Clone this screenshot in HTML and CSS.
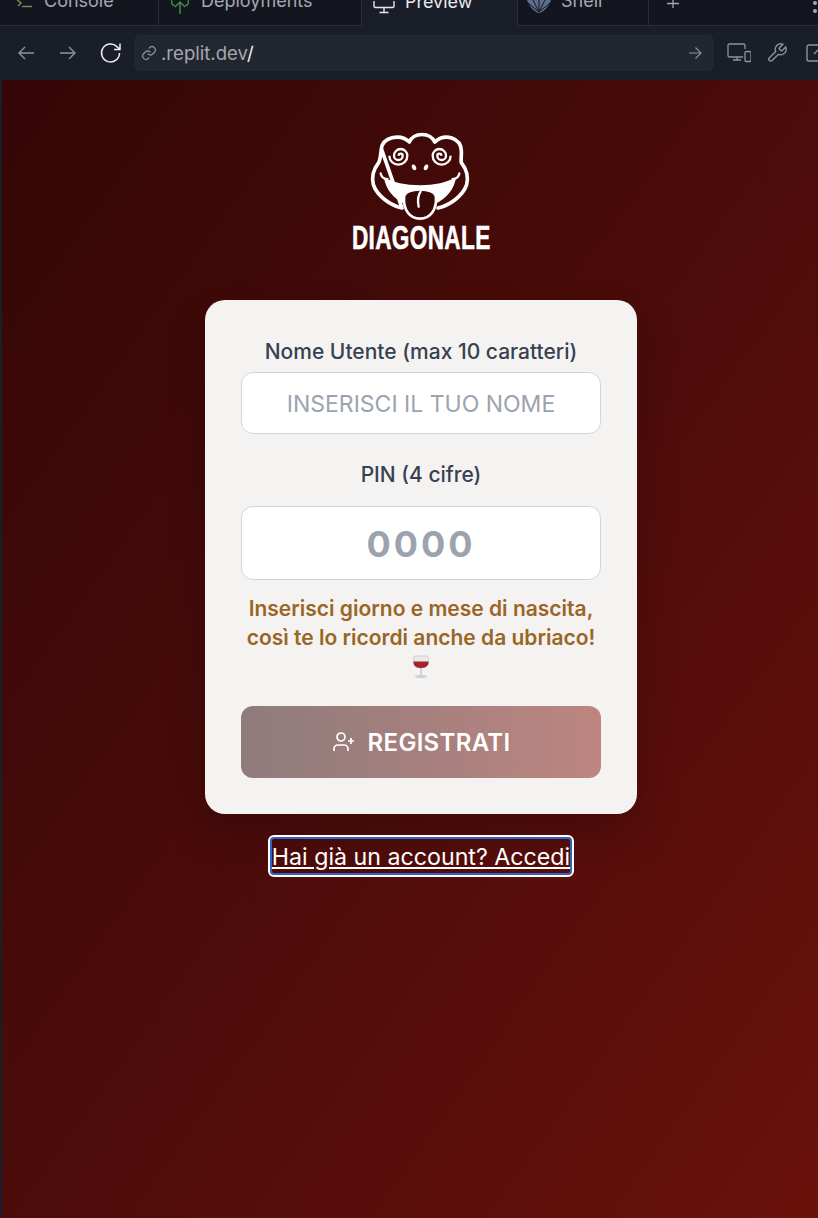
FILE: index.html
```html
<!DOCTYPE html>
<html>
  <head>
    <title>Diagonale</title>
    <link rel="stylesheet" href="styles.css">
  </head>
  <body>
    <div class="tabbar">
      <div class="tab tab-console">
        <svg class="tab-icon" width="20" height="12" viewBox="0 0 20 12"><path d="M1 0l7 6-3 3" fill="none" stroke="#8f8560" stroke-width="1.4"/><path d="M9 9.500h10" stroke="#8f8560" stroke-width="1.4"/></svg>
        <span>Console</span>
      </div>
      <div class="tab tab-deploy">
        <svg class="tab-icon" width="20" height="14" viewBox="0 0 20 14"><path d="M10 14V2M5 7l5-5 5 5" fill="none" stroke="#3f8a4a" stroke-width="1.5"/><path d="M2 0c-1 3 0 5 3 6M18 0c1 3 0 5-3 6" fill="none" stroke="#3f8a4a" stroke-width="1.3"/></svg>
        <span>Deployments</span>
      </div>
      <div class="tab tab-preview">
        <svg class="tab-icon" width="22" height="13" viewBox="0 0 22 13"><path d="M1 0v5a1.500 1.500 0 0 0 1.500 1.500h17A1.500 1.500 0 0 0 21 5V0M11 6.500v5M6.500 11.500h9" fill="none" stroke="#e4e6ea" stroke-width="1.4"/></svg>
        <span>Preview</span>
      </div>
      <div class="tab tab-shell">
        <svg class="tab-icon" width="24" height="13" viewBox="0 0 24 13"><path d="M12 13C9 13 2 7 0 0h24c-2 7-9 13-12 13z" fill="#5d6f8c"/><path d="M12 12L6 0M12 12V0M12 12l6-12M12 12L1 3M12 12l11-9" stroke="#14161f" stroke-width="1"/></svg>
        <span>Shell</span>
      </div>
      <div class="tab tab-add">
        <svg width="14" height="14" viewBox="0 0 14 14"><path d="M7 0v8M1 3.500h12" stroke="#a4a8b0" stroke-width="1.3"/></svg>
      </div>
      <div class="tab-more"><i></i><i></i></div>
    </div>

    <div class="toolbar">
      <svg class="nav-icon" width="20" height="20" viewBox="0 0 20 20"><path d="M18 10H3M9 4l-6 6 6 6" fill="none" stroke="#8d929b" stroke-width="1.4"/></svg>
      <svg class="nav-icon" width="20" height="20" viewBox="0 0 20 20"><path d="M2 10h15M11 4l6 6-6 6" fill="none" stroke="#8d929b" stroke-width="1.4"/></svg>
      <svg class="nav-icon" width="24" height="24" viewBox="0 0 24 24"><path d="M20.500 12a9 9 0 1 1-2.600-6.400L21 8.500M21 2.500v6h-6" fill="none" stroke="#eceef1" stroke-width="1.5"/></svg>
      <div class="address">
        <svg width="16" height="16" viewBox="0 0 24 24"><path d="M10 13a5 5 0 0 0 7.500.5l3-3a5 5 0 0 0-7-7l-1.700 1.700M14 11a5 5 0 0 0-7.500-.5l-3 3a5 5 0 0 0 7 7l1.700-1.700" fill="none" stroke="#868b94" stroke-width="2"/></svg>
        <span class="address-text">.replit.dev<b>/</b></span>
        <svg class="address-go" width="14" height="14" viewBox="0 0 14 14"><path d="M1 7h12M7.500 1.500L13 7l-5.500 5.500" fill="none" stroke="#8d929b" stroke-width="1.1"/></svg>
      </div>
      <svg class="tool-icon" width="24" height="22" viewBox="0 0 24 22"><path d="M16 15H2.500A1.500 1.500 0 0 1 1 13.500v-10A1.500 1.500 0 0 1 2.500 2h14A1.500 1.500 0 0 1 18 3.500V7M10 15v3M6 18h8" fill="none" stroke="#8d929b" stroke-width="1.3"/><rect x="18" y="9.500" width="6" height="10" rx="1.200" fill="none" stroke="#8d929b" stroke-width="1.3"/></svg>
      <svg class="tool-icon wrench" width="22" height="22" viewBox="0 0 24 24"><path d="M14.700 6.300a1 1 0 0 0 0 1.400l1.600 1.600a1 1 0 0 0 1.400 0l3.800-3.800a6 6 0 0 1-7.900 7.900l-6.900 6.900a2.100 2.100 0 0 1-3-3l6.900-6.900a6 6 0 0 1 7.900-7.900z" fill="none" stroke="#8d929b" stroke-width="1.5"/></svg>
      <svg class="tool-icon" width="18" height="18" viewBox="0 0 18 18"><path d="M17 1H3a2 2 0 0 0-2 2v12a2 2 0 0 0 2 2h15M8 10l6-6" fill="none" stroke="#8d929b" stroke-width="1.4"/></svg>
    </div>

    <div class="app">
      <div class="logo">
        <svg class="logo-mark" width="115" height="95" viewBox="0 0 345 285">
          <path d="M52 62C56 30 106 14 136 42C150 12 198 12 212 42C244 14 290 30 292 68C293 84 290 94 292 104C306 122 314 146 308 170C296 205 256 232 222 240M114 240C80 232 40 205 28 170C22 146 30 122 44 104C50 92 50 78 52 62Z" fill="none" stroke="#fff" stroke-width="11" stroke-linejoin="round" stroke-linecap="round"/>
          <path d="M60 147C110 180 226 180 276 147C272 185 245 212 214 228L205 200H130L122 228C90 212 64 185 60 147Z" fill="#fff"/>
          <path d="M120 208C120 176 216 176 216 208C218 244 200 272 168 272C136 272 118 244 120 208Z" fill="#3b0908" stroke="#fff" stroke-width="8"/>
          <path d="M170 190C162 202 160 218 164 236" fill="none" stroke="#fff" stroke-width="7" stroke-linecap="round"/>
          <path d="M50 136C52 148 60 153 70 153M286 136C284 148 276 153 266 153" fill="none" stroke="#fff" stroke-width="7" stroke-linecap="round"/>
          <ellipse cx="150" cy="118" rx="6" ry="9" transform="rotate(-25 150 118)" fill="#fff"/>
          <ellipse cx="186" cy="118" rx="6" ry="9" transform="rotate(25 186 118)" fill="#fff"/>
          <path class="spiral" d="M104 83a6 6 0 0 1 12 0a13 13 0 0 1-26 0a20 20 0 0 1 40 0a27 27 0 0 1-54 0"/>
          <path class="spiral" d="M232 83a6 6 0 0 0-12 0a13 13 0 0 0 26 0a20 20 0 0 0-40 0a27 27 0 0 0 54 0"/>
        </svg>
        <div class="logo-name">DIAGONALE</div>
      </div>

      <form class="card">
        <label class="field-label" for="username">Nome Utente (max 10 caratteri)</label>
        <input class="text-input" type="text" id="username" placeholder="INSERISCI IL TUO NOME">
        <label class="field-label pin-label" for="pin">PIN (4 cifre)</label>
        <input class="text-input pin-input" type="text" id="pin" placeholder="0000">
        <p class="pin-hint">Inserisci giorno e mese di nascita, così te lo ricordi anche da ubriaco!
          <svg class="wine" width="20" height="24" viewBox="0 0 20 24">
            <path d="M3.500 1h13c2 5 1.500 12-6.500 12S1.500 6 3.500 1z" fill="#e9e9ea" stroke="#b9bbbf" stroke-width=".6"/>
            <path d="M2.500 6.500h15c.3 3.500-1.500 6.500-7.500 6.500s-7.800-3-7.500-6.500z" fill="#a3222c"/>
            <path d="M9.200 13h1.600v7H9.200z" fill="#c9cbce"/>
            <ellipse cx="10" cy="21.500" rx="6" ry="1.700" fill="#cfd1d4"/>
          </svg>
        </p>
        <button class="submit-btn" type="button">
          <svg width="24" height="24" viewBox="0 0 24 24"><path d="M16 21v-2a4 4 0 0 0-4-4H6a4 4 0 0 0-4 4v2M19 8v6M22 11h-6" fill="none" stroke="#fff" stroke-width="1.7"/><circle cx="9" cy="7" r="4" fill="none" stroke="#fff" stroke-width="1.7"/></svg>
          <span class="submit-text">REGISTRATI</span>
        </button>
      </form>

      <a class="switch-link" href="#">Hai già un account? Accedi</a>
    </div>
  </body>
</html>
```

FILE: styles.css
```css
* {
  box-sizing: border-box;
}
html, body {
  height: 100%;
}
body {
  margin: 0;
  overflow: hidden;
  background-color: #1a1e28;
  font-family: "Inter", "Liberation Sans", sans-serif;
  display: flex;
  flex-direction: column;
}

/* replit tabs */
.tabbar {
  height: 26px;
  flex: none;
  display: flex;
  background-color: #14161f;
  color: #a4a8b0;
  font-size: 18px;
  overflow: hidden;
}
.tab {
  display: flex;
  align-items: flex-end;
  gap: 12px;
  height: 26px;
  line-height: 20px;
  padding-bottom: 14px;
  border-right: 1px solid #2a2d37;
  border-bottom: 1px solid #2a2d37;
}
.tab-icon {
  flex: none;
}
.tab-console {
  width: 159px;
  padding-left: 13px;
  gap: 11px;
}
.tab-console .tab-icon {
  margin-bottom: 2px;
}
.tab-deploy {
  width: 203px;
  padding-left: 11px;
  gap: 11px;
}
.tab-deploy .tab-icon {
  margin-bottom: -3px;
}
.tab-preview {
  width: 156px;
  padding-left: 11px;
  color: #e8eaee;
  background-color: #1a1e28;
  border-bottom: none;
  gap: 10px;
}
.tab-preview .tab-icon {
  margin-bottom: -2px;
}
.tab-shell {
  width: 131px;
  padding-left: 9px;
  gap: 10px;
}
.tab-shell .tab-icon {
  margin-bottom: -2px;
}
.tab-add {
  flex: 1;
  padding-left: 17px;
  padding-bottom: 11px;
  border-right: none;
}
.tab-more {
  width: 18px;
  flex: none;
  border-bottom: 1px solid #2a2d37;
  display: flex;
  flex-direction: column;
  gap: 4px;
  padding: 1px 0 0 13px;
}
.tab-more i {
  width: 4px;
  height: 4px;
  border-radius: 50%;
  background-color: #a4a8b0;
}

/* url bar */
.toolbar {
  height: 54px;
  flex: none;
  display: flex;
  align-items: center;
  padding: 0 0 0 16px;
  background-color: #1a1e28;
  overflow: hidden;
}
.nav-icon {
  flex: none;
  margin-right: 22px;
}
.nav-icon:nth-child(3) {
  margin-left: -1px;
  margin-right: 11px;
}
.address {
  flex: none;
  width: 580px;
  height: 36px;
  border-radius: 6px;
  background-color: #22262f;
  display: flex;
  align-items: center;
  gap: 4px;
  padding: 0 12px 0 7px;
  margin-right: 13px;
}
.address-text {
  color: #a4a8b0;
  font-size: 18.6px;
}
.address-text b {
  color: #eceef1;
  font-weight: 400;
}
.address-go {
  margin-left: auto;
}
.tool-icon {
  flex: none;
  margin-right: 15px;
}
.wrench {
  margin-right: 18px;
}

/* the app in the preview */
.app {
  flex: 1;
  margin-left: 2px;
  background: linear-gradient(to bottom right, #340605 0%, #4b0c0a 50%, #6b110c 100%);
  display: flex;
  flex-direction: column;
  align-items: center;
  padding: 48px 0 0 22px;
}
.logo {
  height: 172px;
  display: flex;
  flex-direction: column;
  align-items: center;
}
.logo-mark {
  display: block;
  flex: none;
}
.spiral {
  fill: none;
  stroke: #fff;
  stroke-width: 7;
}
.logo-name {
  margin-top: -2px;
  color: #fff;
  font-family: "Liberation Sans", sans-serif;
  font-weight: 700;
  font-size: 34px;
  line-height: 32px;
  letter-spacing: .5px;
  transform: scaleX(.665);
  -webkit-text-stroke: .6px #fff;
  white-space: nowrap;
}
.card {
  width: 432px;
  height: 514px;
  padding: 36px 36px 0;
  background-color: #f5f3f2;
  border-radius: 20px;
  box-shadow: 0 20px 40px rgba(0, 0, 0, .2);
  display: flex;
  flex-direction: column;
}
.field-label {
  color: #374151;
  font-size: 21px;
  font-weight: 500;
  line-height: 28px;
  text-align: center;
  margin-top: 2px;
}
.text-input {
  width: 100%;
  height: 62px;
  margin-top: 6px;
  padding-top: 2px;
  border: 1px solid #d1d5db;
  border-radius: 12px;
  background-color: #fff;
  font-family: inherit;
  font-size: 23px;
  text-align: center;
  outline: none;
}
.text-input::placeholder {
  color: #9ca3af;
  opacity: 1;
}
.pin-label {
  margin-top: 27px;
}
.pin-input {
  height: 74px;
  margin-top: 17px;
  font-size: 36px;
  font-weight: 700;
  letter-spacing: 3px;
}
.pin-hint {
  margin: 14px 0 0;
  height: 112px;
  color: #9a6626;
  font-size: 21px;
  font-weight: 600;
  line-height: 29px;
  text-align: center;
}
.wine {
  display: block;
  margin: 3px auto 0;
}
.submit-btn {
  width: 100%;
  height: 72px;
  padding-top: 1px;
  border: none;
  border-radius: 12px;
  background: linear-gradient(90deg, #8e7b7c 0%, #bd8580 100%);
  color: #fff;
  font-family: inherit;
  font-size: 24px;
  font-weight: 600;
  letter-spacing: .3px;
  display: flex;
  align-items: center;
  justify-content: center;
  gap: 12px;
}
.switch-link {
  margin-top: 23px;
  color: #fff;
  font-size: 23.2px;
  line-height: 37px;
  height: 38px;
  text-decoration: underline;
  border: 2px solid #2f62c4;
  border-radius: 4px;
  outline: 2px solid #fff;
  white-space: nowrap;
}
```
